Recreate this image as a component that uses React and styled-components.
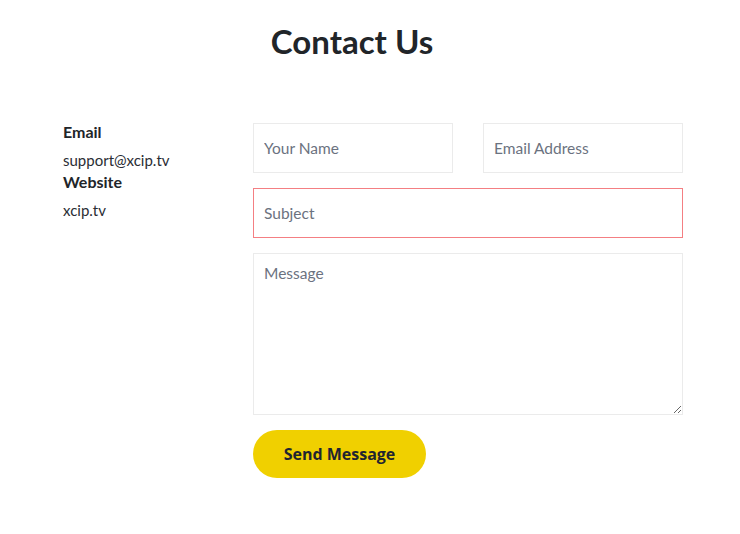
import React from "react";
import styled, { createGlobalStyle } from "styled-components";

const GlobalStyle = createGlobalStyle`
  body {
    margin: 0;
    background: #fff;
    font-family: "Lato", "Noto Sans", sans-serif;
    color: #212529;
  }
  * {
    box-sizing: border-box;
  }
`;

const Page = styled.div`
  width: 740px;
  min-height: 534px;
  padding-top: 21px;
`;

const Title = styled.h2`
  margin: 0;
  padding-right: 36px;
  text-align: center;
  font-size: 33px;
  line-height: 40px;
  font-weight: 700;
  color: #212529;
`;

const Section = styled.div`
  display: flex;
  padding-left: 63px;
  margin-top: 62px;
`;

const Info = styled.div`
  width: 190px;
  flex-shrink: 0;
  display: flex;
  flex-direction: column;
  margin-top: -2px;
`;

const Label = styled.div`
  font-size: 16px;
  line-height: 22px;
  font-weight: 700;
`;

const Value = styled.div`
  font-size: 15px;
  line-height: 22px;
  margin-top: 6px;
  color: #2a2d34;
`;

const Form = styled.form`
  width: 430px;
  flex-shrink: 0;
  display: grid;
  grid-template-columns: minmax(0, 1fr) minmax(0, 1fr);
  column-gap: 30px;
  row-gap: 15px;
`;

const Field = styled.input`
  grid-column: ${(p) => (p.$wide ? "1 / -1" : "auto")};
  width: 100%;
  min-width: 0;
  height: 50px;
  border: 1px solid ${(p) => (p.$invalid ? "#f47f83" : "#ebebeb")};
  padding: 0 10px;
  font-family: inherit;
  font-size: 15.5px;
  color: #212529;
  outline: none;
  &::placeholder {
    color: #6b7280;
  }
`;

const Message = styled.textarea`
  grid-column: 1 / -1;
  width: 100%;
  height: 162px;
  border: 1px solid #ebebeb;
  padding: 10px;
  font-family: inherit;
  font-size: 15.5px;
  resize: vertical;
  outline: none;
  &::placeholder {
    color: #6b7280;
  }
`;

const Actions = styled.div`
  grid-column: 1 / -1;
`;

const SendButton = styled.button`
  width: 173px;
  height: 48px;
  border: none;
  border-radius: 24px;
  background: #f0d000;
  color: #1f2430;
  font-family: "Open Sans", "Noto Sans", sans-serif;
  font-weight: 700;
  font-size: 16px;
  cursor: pointer;
`;

export default function App() {
  return (
    <>
      <GlobalStyle />
      <Page>
        <Title>Contact Us</Title>
        <Section>
          <Info>
            <Label>Email</Label>
            <Value>support@xcip.tv</Value>
            <Label>Website</Label>
            <Value>xcip.tv</Value>
          </Info>
          <Form onSubmit={(e) => e.preventDefault()}>
            <Field placeholder="Your Name" />
            <Field placeholder="Email Address" />
            <Field $wide $invalid placeholder="Subject" />
            <Message placeholder="Message" />
            <Actions>
              <SendButton type="submit">Send Message</SendButton>
            </Actions>
          </Form>
        </Section>
      </Page>
    </>
  );
}
